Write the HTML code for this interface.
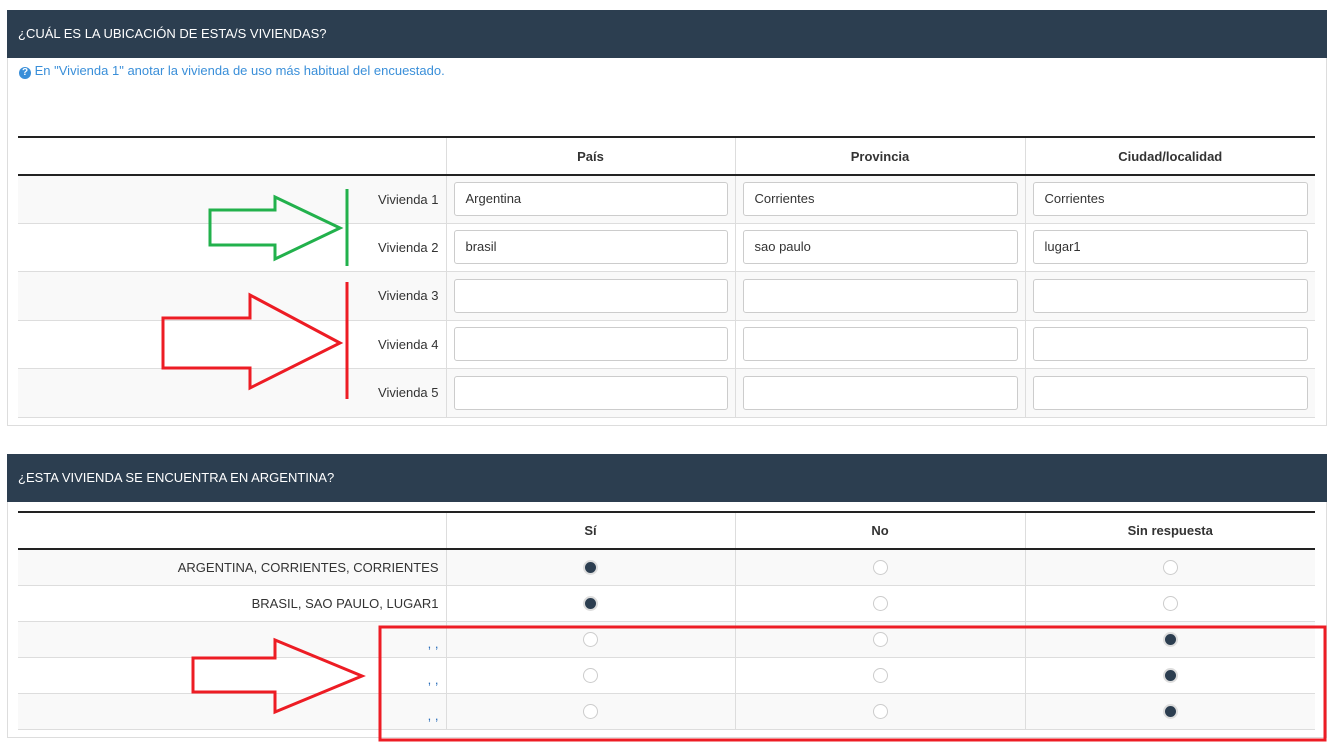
<!DOCTYPE html>
<html><head><meta charset="utf-8"><style>
*{box-sizing:border-box;margin:0;padding:0}
body{width:1341px;height:752px;background:#fff;font-family:"Liberation Sans",sans-serif;font-size:13px;color:#333;position:relative;overflow:hidden}
.hdr{position:absolute;left:7px;width:1320px;height:48px;background:#2c3e50;color:#fff;font-size:13px;line-height:48px;padding-left:11px}
.panel{position:absolute;left:7px;width:1320px;border:1px solid #ddd;border-top:none}
table{position:absolute;left:18px;width:1297px;border-collapse:collapse;table-layout:fixed}
th{font-weight:bold;text-align:center;border-left:1px solid #ddd;font-size:13px}
th:first-child{border-left:none}
thead tr{border-top:2px solid #222;border-bottom:2px solid #222}
td{border-top:1px solid #ddd;border-left:1px solid #ddd;border-bottom:1px solid #ddd;padding:0 7px}
td:first-child{text-align:right;border-left:none}
tbody tr:nth-child(odd){background:#f9f9f9}
.inp{height:34px;border:1px solid #ccc;border-radius:3px;background:#fff;padding:0 11px;line-height:32px;font-size:13px}
.r{width:15px;height:15px;border-radius:50%;border:1px solid #ccc;background:#fff;margin:0 auto}
.r.on{background:#2c3e50;border:2px solid #ddd}
.blue{color:#2a6ebb;vertical-align:bottom;padding-bottom:6px}
</style></head><body>
<div class="hdr" style="top:10px">¿CUÁL ES LA UBICACIÓN DE ESTA/S VIVIENDAS?</div>
<div class="panel" style="top:58px;height:368px"></div>
<div style="position:absolute;left:19px;top:63px;color:#3a8fd9;font-size:13px"><span style="display:inline-block;width:12px;height:12px;border-radius:50%;background:#3a8fd9;color:#fff;font-size:10px;line-height:12px;text-align:center;font-weight:bold">?</span> En "Vivienda 1" anotar la vivienda de uso más habitual del encuestado.</div>
<table style="top:136px">
<colgroup><col style="width:428px"><col style="width:289px"><col style="width:290px"><col style="width:290px"></colgroup>
<thead><tr style="height:38px"><th></th><th>País</th><th>Provincia</th><th>Ciudad/localidad</th></tr></thead>
<tbody>
<tr style="height:48px"><td>Vivienda 1</td><td><div class="inp">Argentina</div></td><td><div class="inp">Corrientes</div></td><td><div class="inp">Corrientes</div></td></tr>
<tr style="height:48px"><td>Vivienda 2</td><td><div class="inp">brasil</div></td><td><div class="inp">sao paulo</div></td><td><div class="inp">lugar1</div></td></tr>
<tr style="height:49px"><td>Vivienda 3</td><td><div class="inp"></div></td><td><div class="inp"></div></td><td><div class="inp"></div></td></tr>
<tr style="height:48px"><td>Vivienda 4</td><td><div class="inp"></div></td><td><div class="inp"></div></td><td><div class="inp"></div></td></tr>
<tr style="height:49px"><td>Vivienda 5</td><td><div class="inp"></div></td><td><div class="inp"></div></td><td><div class="inp"></div></td></tr>
</tbody></table>

<div class="hdr" style="top:454px">¿ESTA VIVIENDA SE ENCUENTRA EN ARGENTINA?</div>
<div class="panel" style="top:502px;height:236px"></div>
<table style="top:511px">
<colgroup><col style="width:428px"><col style="width:289px"><col style="width:290px"><col style="width:290px"></colgroup>
<thead><tr style="height:37px"><th></th><th>Sí</th><th>No</th><th>Sin respuesta</th></tr></thead>
<tbody>
<tr style="height:36px"><td>ARGENTINA, CORRIENTES, CORRIENTES</td><td><div class="r on"></div></td><td><div class="r"></div></td><td><div class="r"></div></td></tr>
<tr style="height:36px"><td>BRASIL, SAO PAULO, LUGAR1</td><td><div class="r on"></div></td><td><div class="r"></div></td><td><div class="r"></div></td></tr>
<tr style="height:36px"><td class="blue">, ,</td><td><div class="r"></div></td><td><div class="r"></div></td><td><div class="r on"></div></td></tr>
<tr style="height:36px"><td class="blue">, ,</td><td><div class="r"></div></td><td><div class="r"></div></td><td><div class="r on"></div></td></tr>
<tr style="height:36px"><td class="blue">, ,</td><td><div class="r"></div></td><td><div class="r"></div></td><td><div class="r on"></div></td></tr>
</tbody></table>

<svg width="1341" height="752" style="position:absolute;left:0;top:0" fill="none" stroke-width="3">
<polygon points="210,210 275,210 275,197 340,228 275,259 275,245 210,245" stroke="#22b14c"/>
<line x1="347" y1="189" x2="347" y2="266" stroke="#22b14c"/>
<polygon points="163,318 250,318 250,295 340,343 250,388 250,368 163,368" stroke="#ed1c24"/>
<line x1="347" y1="282" x2="347" y2="399" stroke="#ed1c24"/>
<polygon points="193,658 275,658 275,640 362,676 275,712 275,692 193,692" stroke="#ed1c24"/>
<rect x="380" y="627" width="945" height="113" stroke="#ed1c24"/>
</svg>
</body></html>
